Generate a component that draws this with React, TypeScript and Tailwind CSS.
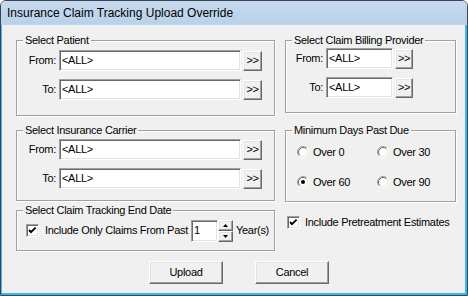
import React from 'react';

// classic win32 3D edges
const raised =
  'bg-[#f0f0f0] border border-t-white border-l-white border-r-[#696969] border-b-[#696969] shadow-[inset_-1px_-1px_0_#a0a0a0,inset_1px_1px_0_#e3e3e3]';
const sunken =
  'bg-white border border-t-[#a0a0a0] border-l-[#a0a0a0] border-r-white border-b-white shadow-[inset_1px_1px_0_#696969,inset_-1px_-1px_0_#e3e3e3]';

function Group({ label, className, children }: { label: string; className?: string; children?: React.ReactNode }) {
  return (
    <div className={`relative border border-[#a0a0a0] shadow-[inset_1px_1px_0_#fff,1px_1px_0_#fff] ${className ?? ''}`}>
      <span className="absolute -top-[7px] left-[6px] px-[2px] bg-[#f0f0f0] leading-[13px] whitespace-nowrap">{label}</span>
      {children}
    </div>
  );
}

function TextBox({ className, value }: { className: string; value: string }) {
  return <div className={`${sunken} h-[21px] pl-[2px] pt-[3px] leading-[13px] ${className}`}>{value}</div>;
}

function PickRow({ label, labelW, boxW, btnW, className }: { label: string; labelW: string; boxW: string; btnW: string; className?: string }) {
  return (
    <div className={`flex ${className ?? ''}`}>
      <div className={`${labelW} text-right pr-[3px] pt-[4px] leading-[13px]`}>{label}</div>
      <TextBox className={boxW} value="<ALL>" />
      <div className={`${raised} ${btnW} h-[20px] ml-[2px] mt-[1px] flex items-center justify-center leading-none tracking-[-0.5px] pb-[1px]`}>
        &gt;&gt;
      </div>
    </div>
  );
}

function Radio({ checked }: { checked?: boolean }) {
  return (
    <svg width="12" height="12" viewBox="0 0 12 12" className="shrink-0">
      <circle cx="6" cy="6" r="4.5" fill="#fff" />
      <path d="M2.11 9.89 A5.5 5.5 0 0 1 9.89 2.11" fill="none" stroke="#a0a0a0" />
      <path d="M9.89 2.11 A5.5 5.5 0 0 1 2.11 9.89" fill="none" stroke="#fff" />
      <path d="M2.82 9.18 A4.5 4.5 0 0 1 9.18 2.82" fill="none" stroke="#696969" />
      <path d="M9.18 2.82 A4.5 4.5 0 0 1 2.82 9.18" fill="none" stroke="#e3e3e3" />
      {checked && <circle cx="6" cy="6" r="2" fill="#000" />}
    </svg>
  );
}

function Check() {
  return (
    <div className={`${sunken} w-[13px] h-[13px] shrink-0 flex items-center justify-center`}>
      <svg width="9" height="9" viewBox="0 0 9 9">
        <polyline points="1,4 3,6.2 7.6,1.6" fill="none" stroke="#000" strokeWidth="1.9" />
      </svg>
    </div>
  );
}

function RadioItem({ label, checked }: { label: string; checked?: boolean }) {
  return (
    <div className="flex items-center gap-[4px] h-[12px] leading-[13px]">
      <Radio checked={checked} />
      <span>{label}</span>
    </div>
  );
}

export default function App() {
  return (
    <div className="w-[468px] h-[296px] flex flex-col border border-[#3a4654] rounded-t-[6px] overflow-hidden font-['Liberation_Sans',Arial,sans-serif] text-black">
      <div className="h-[24px] shrink-0 flex items-center pl-[6px] bg-gradient-to-b from-[#c6d9ee] to-[#b9d1ea] text-[12px]">
        Insurance Claim Tracking Upload Override
      </div>

      <div className="flex-1 flex flex-col bg-[#f0f0f0] border-l border-r-2 border-b-2 border-[#3fb6ea] pl-[14px] pt-[15px] text-[11px] tracking-[-0.3px]">
        <div className="flex gap-[10px]">
          <div className="w-[259px] flex flex-col">
            <Group label="Select Patient" className="h-[76px] pt-[9px]">
              <PickRow label="From:" labelW="w-[42px]" boxW="w-[182px]" btnW="w-[19px]" />
              <PickRow label="To:" labelW="w-[42px]" boxW="w-[182px]" btnW="w-[19px]" className="mt-[8px]" />
            </Group>

            <Group label="Select Insurance Carrier" className="mt-[14px] h-[71px] pt-[8px]">
              <PickRow label="From:" labelW="w-[42px]" boxW="w-[182px]" btnW="w-[19px]" />
              <PickRow label="To:" labelW="w-[42px]" boxW="w-[182px]" btnW="w-[19px]" className="mt-[8px]" />
            </Group>

            <Group label="Select Claim Tracking End Date" className="mt-[9px] h-[41px] flex items-center pl-[9px]">
              <Check />
              <span className="w-[152px] pl-[6px] leading-[13px] whitespace-nowrap">Include Only Claims From Past</span>
              <div className={`${sunken} w-[27px] h-[22px] pl-[2px] pt-[3px] leading-[13px]`}>1</div>
              <div className="flex flex-col">
                <div className={`${raised} w-[15px] h-[11px] flex items-center justify-center`}>
                  <svg width="5" height="3" viewBox="0 0 5 3"><polygon points="2.5,0 5,3 0,3" fill="#000" /></svg>
                </div>
                <div className={`${raised} w-[15px] h-[11px] flex items-center justify-center`}>
                  <svg width="5" height="3" viewBox="0 0 5 3"><polygon points="0,0 5,0 2.5,3" fill="#000" /></svg>
                </div>
              </div>
              <span className="pl-[3px] leading-[13px]">Year(s)</span>
            </Group>
          </div>

          <div className="w-[171px] flex flex-col">
            <Group label="Select Claim Billing Provider" className="h-[73px] pt-[7px]">
              <PickRow label="From:" labelW="w-[40px]" boxW="w-[67px]" btnW="w-[18px]" />
              <PickRow label="To:" labelW="w-[40px]" boxW="w-[67px]" btnW="w-[18px]" className="mt-[8px]" />
            </Group>

            <Group label="Minimum Days Past Due" className="mt-[17px] h-[72px] pt-[15px] pl-[11px]">
              <div className="grid grid-cols-[80px_1fr] gap-y-[18px]">
                <RadioItem label="Over 0" />
                <RadioItem label="Over 30" />
                <RadioItem label="Over 60" checked />
                <RadioItem label="Over 90" />
              </div>
            </Group>

            <div className="mt-[14px] ml-[2px] flex items-center">
              <Check />
              <span className="pl-[5px] leading-[13px] whitespace-nowrap">Include Pretreatment Estimates</span>
            </div>
          </div>
        </div>

        <div className="mt-[10px] flex pl-[133px] gap-[32px]">
          <div className={`${raised} w-[74px] h-[23px] flex items-center justify-center`}>Upload</div>
          <div className={`${raised} w-[74px] h-[23px] flex items-center justify-center`}>Cancel</div>
        </div>
      </div>
    </div>
  );
}
